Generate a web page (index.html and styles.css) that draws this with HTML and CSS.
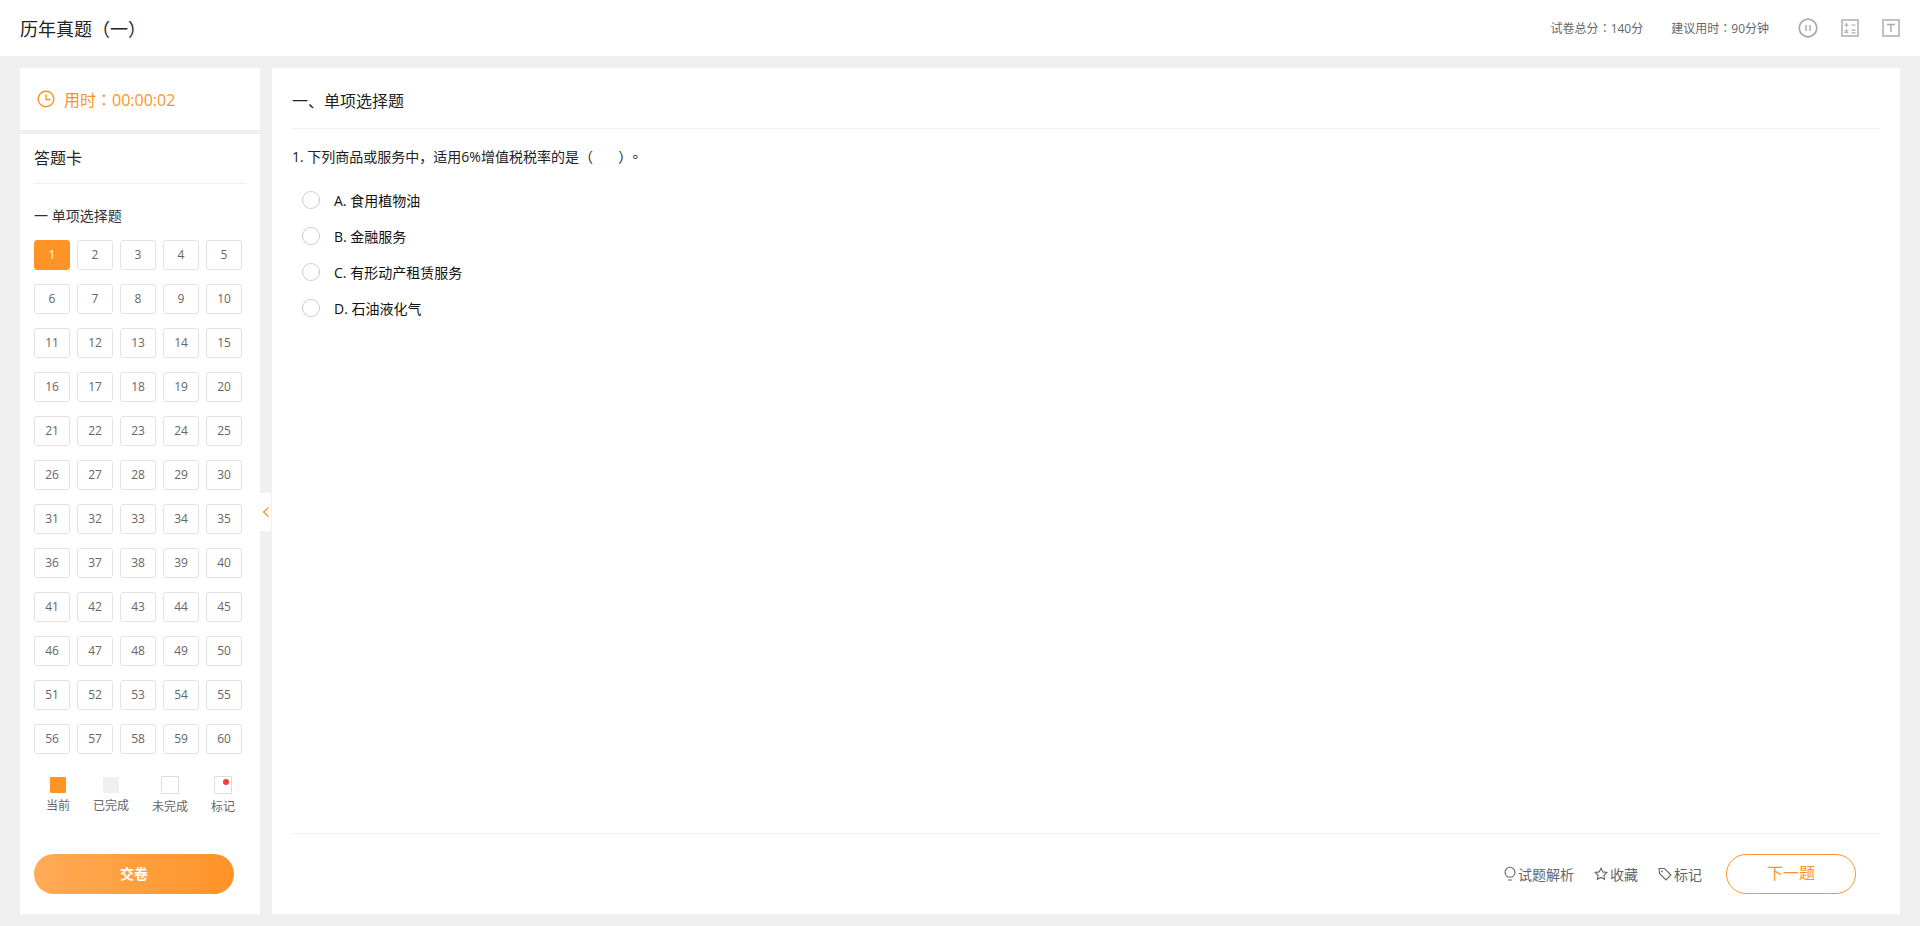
FILE: index.html
```html
<!DOCTYPE html>
<html>
<head>
<meta charset="UTF-8">
<title>历年真题（一）</title>
<link rel="stylesheet" href="styles.css">
</head>
<body>

<div class="header">
  <div class="paper-title">历年真题（一）</div>
  <div class="header-right">
    <span class="paper-info">试卷总分<span class="mid">：</span>140分</span>
    <span class="paper-info">建议用时<span class="mid">：</span>90分钟</span>
    <svg class="tool" width="20" height="20" viewBox="0 0 20 20"><circle cx="10" cy="10" r="8.8" fill="none" stroke="#aaa" stroke-width="1.8"/><path d="M8 7v6M12 7v6" stroke="#aaa" stroke-width="1.4"/></svg>
    <svg class="tool" width="18" height="18" viewBox="0 0 18 18"><rect x="1" y="1" width="16" height="16" fill="none" stroke="#bbb" stroke-width="1.8"/><path d="M3.5 6h4M5.5 4v4M10.500 6h4M3.800 11l3.400 3M7.200 11l-3.400 3M10.500 11.200h4M10.500 13.800h4" stroke="#aaa" stroke-width="1.200" fill="none"/></svg>
    <svg class="tool" width="18" height="18" viewBox="0 0 18 18"><rect x="1" y="1" width="16" height="16" fill="none" stroke="#bbb" stroke-width="1.800"/><path d="M5 5.500h8M9 5.500v7.500" stroke="#aaa" stroke-width="1.400" fill="none"/></svg>
  </div>
</div>

<div class="page">
  <div class="side">
    <div class="timer">
      <svg width="18" height="18" viewBox="0 0 18 18"><circle cx="9" cy="9" r="7.800" fill="none" stroke="#ff9326" stroke-width="1.400"/><path d="M9 4.500V9.500H13.500" fill="none" stroke="#ff9326" stroke-width="1.400"/></svg>
      <span>用时<span class="mid">：</span>00:00:02</span>
    </div>
    <div class="card">
      <div class="card-title">答题卡</div>
      <div class="group-title">一 单项选择题</div>
      <div class="nums">
        <a class="num current">1</a><a class="num">2</a><a class="num">3</a><a class="num">4</a><a class="num">5</a>
        <a class="num">6</a><a class="num">7</a><a class="num">8</a><a class="num">9</a><a class="num">10</a>
        <a class="num">11</a><a class="num">12</a><a class="num">13</a><a class="num">14</a><a class="num">15</a>
        <a class="num">16</a><a class="num">17</a><a class="num">18</a><a class="num">19</a><a class="num">20</a>
        <a class="num">21</a><a class="num">22</a><a class="num">23</a><a class="num">24</a><a class="num">25</a>
        <a class="num">26</a><a class="num">27</a><a class="num">28</a><a class="num">29</a><a class="num">30</a>
        <a class="num">31</a><a class="num">32</a><a class="num">33</a><a class="num">34</a><a class="num">35</a>
        <a class="num">36</a><a class="num">37</a><a class="num">38</a><a class="num">39</a><a class="num">40</a>
        <a class="num">41</a><a class="num">42</a><a class="num">43</a><a class="num">44</a><a class="num">45</a>
        <a class="num">46</a><a class="num">47</a><a class="num">48</a><a class="num">49</a><a class="num">50</a>
        <a class="num">51</a><a class="num">52</a><a class="num">53</a><a class="num">54</a><a class="num">55</a>
        <a class="num">56</a><a class="num">57</a><a class="num">58</a><a class="num">59</a><a class="num">60</a>
      </div>
      <div class="legend">
        <div class="legend-item"><i class="swatch s-current"></i>当前</div>
        <div class="legend-item"><i class="swatch s-done"></i>已完成</div>
        <div class="legend-item"><i class="swatch s-todo"></i>未完成</div>
        <div class="legend-item"><i class="swatch s-todo s-mark"></i>标记</div>
      </div>
      <a class="submit">交卷</a>
    </div>
    <a class="collapse"><svg width="8" height="12" viewBox="0 0 8 12"><path d="M6.500 1.500L1.500 6l5 4.500" fill="none" stroke="#ff9326" stroke-width="1.200"/></svg></a>
  </div>

  <div class="main">
    <div class="section-title">一、单项选择题</div>
    <div class="question">1. 下列商品或服务中，适用6%增值税税率的是（&nbsp;&nbsp;&nbsp;&nbsp;&nbsp;&nbsp;&nbsp;）<span class="mid end">。</span></div>
    <div class="options">
      <label class="option"><i class="radio"></i>A. 食用植物油</label>
      <label class="option"><i class="radio"></i>B. 金融服务</label>
      <label class="option"><i class="radio"></i>C. 有形动产租赁服务</label>
      <label class="option"><i class="radio"></i>D. 石油液化气</label>
    </div>
    <div class="footer">
      <a class="action"><svg width="12" height="16" viewBox="0 0 12 16"><path d="M3.800 11C2 9.800 1 8.500 1 6.300a5 5 0 0 1 10 0C11 8.500 10 9.800 8.200 11zM4 14h4" fill="none" stroke="#666" stroke-width="1.100"/></svg>试题解析</a>
      <a class="action"><svg width="14" height="14" viewBox="0 0 14 14"><path d="M7 1.200l1.800 3.700 4 .6-2.900 2.800.7 4L7 10.400l-3.600 1.900.7-4L1.200 5.500l4-.6z" fill="none" stroke="#666" stroke-width="1.100"/></svg>收藏</a>
      <a class="action"><svg width="14" height="14" viewBox="0 0 14 14"><path d="M1 1.500h5.500l6.500 6.500-5 5-6.500-6.500z" fill="none" stroke="#666" stroke-width="1.100"/><circle cx="4" cy="4.300" r=".9" fill="#666"/></svg>标记</a>
      <a class="next">下一题</a>
    </div>
  </div>
</div>

</body>
</html>
```

FILE: styles.css
```css
* { box-sizing: border-box; }
html { height: 926px; overflow: hidden; }
body { margin: 0; height: 926px; overflow: hidden; background: #efefef; color: #333; font-family: "Open Sans", "Noto Sans CJK SC", sans-serif; font-size: 14px; display: flex; flex-direction: column; }
a { cursor: pointer; text-decoration: none; }
i { font-style: normal; }
.mid { font-family: "Noto Sans CJK TC", sans-serif; }

.header { height: 56px; flex: none; background: #fff; display: flex; align-items: center; justify-content: space-between; padding: 0 20px; }
.paper-title { font-size: 18px; color: #222; }
.header-right { display: flex; align-items: center; }
.paper-info { font-size: 12px; color: #666; margin-right: 28px; }
.paper-info + .paper-info { margin-right: 29px; }
.tool { margin-left: 23px; display: block; }
.tool:first-of-type { margin-left: 0; }

.page { flex: 1; display: flex; gap: 12px; padding: 12px 20px; min-height: 0; }
.side { width: 240px; flex: none; display: flex; flex-direction: column; gap: 4px; position: relative; }

.timer { height: 62px; flex: none; background: #fff; display: flex; align-items: center; padding-left: 17px; gap: 9px; color: #ff9326; font-size: 16px; }
.timer svg { display: block; }

.card { flex: 1; background: #fff; padding: 0 14px; display: flex; flex-direction: column; }
.card-title { height: 50px; flex: none; line-height: 49px; font-size: 16px; color: #222; border-bottom: 1px solid #efefef; }
.group-title { font-size: 14px; line-height: 20px; color: #333; margin: 22px 0 14px; }
.nums { display: grid; grid-template-columns: repeat(5, 36px); grid-auto-rows: 30px; column-gap: 7px; row-gap: 14px; }
.num { border: 1px solid #e3e3e3; border-radius: 3px; color: #666; font-size: 12px; text-align: center; line-height: 28px; }
.num.current { background: #ff9326; border-color: #ff9326; color: #fff; }

.legend { display: grid; grid-template-columns: 48px 58px 60px 46px; margin-top: 23px; }
.legend-item { display: flex; flex-direction: column; align-items: center; font-size: 12px; color: #666; line-height: 16px; gap: 5px; }
.swatch { width: 16px; height: 16px; border-radius: 1px; display: block; position: relative; }
.s-current { background: #ff9326; }
.s-done { background: #efefef; }
.s-todo { width: 18px; height: 18px; border: 1px solid #ddd; margin-top: -1px; }
.s-mark::after { content: ""; position: absolute; top: 2px; right: 2px; width: 6px; height: 6px; border-radius: 50%; background: #ff3b30; }

.submit { margin-top: 39px; width: 200px; height: 40px; flex: none; border-radius: 20px; background: linear-gradient(90deg, #ffab57, #ff9326); color: #fff; font-weight: bold; font-size: 14px; text-align: center; line-height: 40px; }

.collapse { position: absolute; left: 240px; top: 424px; width: 12px; height: 40px; background: #fff; border: 1px solid #ffeedd; border-left: 0; border-radius: 0 4px 4px 0; display: flex; align-items: center; justify-content: center; }

.main { flex: 1; background: #fff; padding: 0 20px; display: flex; flex-direction: column; min-width: 0; }
.section-title { height: 61px; flex: none; line-height: 66px; font-size: 16px; color: #222; border-bottom: 1px solid #efefef; }
.question { font-size: 14px; line-height: 22px; color: #222; margin-top: 16px; }
.end { margin-left: 3px; }
.options { margin-top: 21px; display: flex; flex-direction: column; gap: 14px; padding-left: 10px; }
.option { display: flex; align-items: center; height: 22px; font-size: 14px; color: #111; }
.radio { width: 18px; height: 18px; border: 1px solid #ccc; border-radius: 50%; margin-right: 14px; flex: none; }

.footer { margin-top: auto; height: 81px; flex: none; border-top: 1px solid #efefef; display: flex; align-items: center; justify-content: flex-end; padding-right: 24px; }
.action { display: flex; align-items: center; color: #666; font-size: 14px; margin-right: 20px; gap: 2px; }
.next { width: 130px; height: 40px; margin-left: 4px; border: 1px solid #ff9326; border-radius: 20px; color: #ff9326; font-size: 16px; text-align: center; line-height: 36px; }
```
